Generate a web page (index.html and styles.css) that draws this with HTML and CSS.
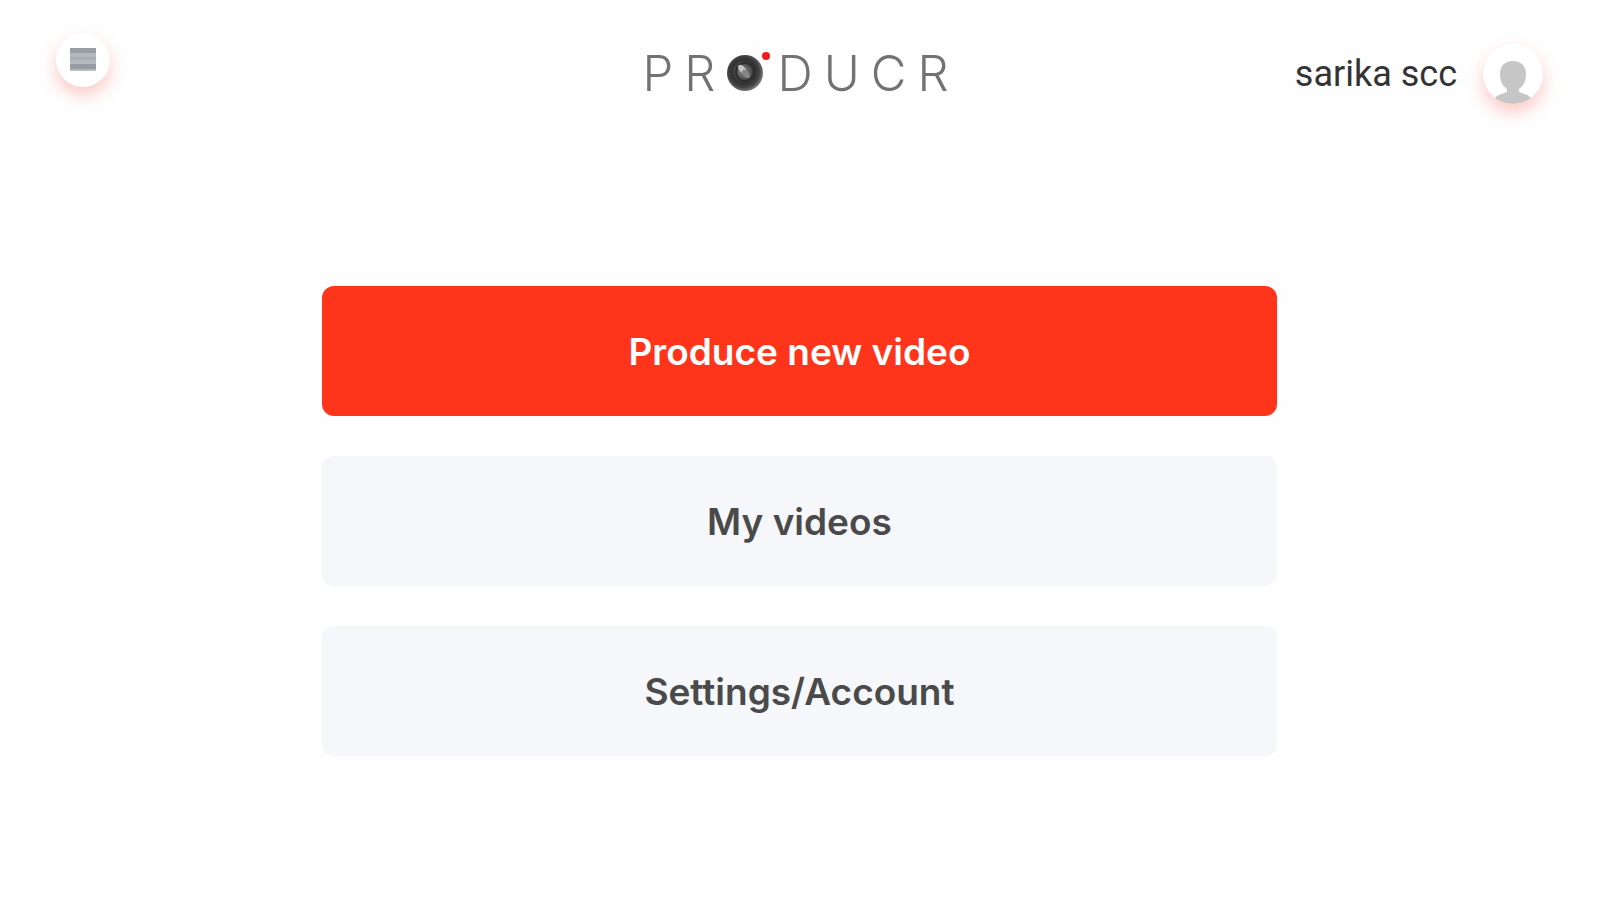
FILE: index.html
```html
<!DOCTYPE html>
<html lang="en">
<head>
    <meta charset="UTF-8">
    <meta name="viewport" content="width=device-width, initial-scale=1.0">
    <title>Producr</title>
    <link rel="stylesheet" href="styles.css">
</head>
<body>

    <header class="header">
        <button class="menu-button" type="button" aria-label="Menu">
            <svg width="28" height="26" viewBox="0 0 28 26">
                <rect x="1" y="1" width="26" height="23" rx="1" fill="#b4b9bf"/>
                <rect x="1" y="1" width="26" height="5" rx="1" fill="#989da4"/>
                <rect x="1" y="10" width="26" height="3" fill="#a9aeb4"/>
                <rect x="1" y="17" width="26" height="5" fill="#969ba2"/>
            </svg>
        </button>

        <a class="logo" href="#" aria-label="Producr">
            <span>P</span>
            <span>R</span>
            <svg class="lens" width="40" height="46" viewBox="0 0 40 46">
                <defs>
                    <radialGradient id="lens" cx="0.46" cy="0.46" r="0.54">
                        <stop offset="0" stop-color="#8a8a8a"/>
                        <stop offset="0.36" stop-color="#555"/>
                        <stop offset="0.6" stop-color="#303030"/>
                        <stop offset="0.82" stop-color="#444"/>
                        <stop offset="1" stop-color="#777"/>
                    </radialGradient>
                </defs>
                <circle cx="19" cy="22" r="18" fill="url(#lens)"/>
                <circle cx="19" cy="21" r="9" fill="none" stroke="#2c2c2c" stroke-width="2"/>
                <ellipse cx="16" cy="18" rx="3" ry="5" fill="#c4c4c4" transform="rotate(-40 16 18)"/>
                <ellipse cx="20" cy="23" rx="3" ry="5" fill="#858585" transform="rotate(-40 20 23)"/>
                <circle cx="40" cy="5" r="4" fill="#ee1c1c"/>
            </svg>
            <span>D</span>
            <span>U</span>
            <span>C</span>
            <span>R</span>
        </a>

        <div class="user">
            <span class="user-name">sarika scc</span>
            <button class="avatar" type="button" aria-label="Profile">
                <svg width="60" height="60" viewBox="0 0 60 60">
                    <path d="M30 17c-8 0-13 5-13 13 0 8 3 12 7 15v3c-5 2-10 3-13 7 5 3 12 5 19 5s14-2 19-5c-3-4-8-5-13-7v-3c4-3 7-7 7-15 0-8-5-13-13-13z" fill="#c6c6c6"/>
                </svg>
            </button>
        </div>
    </header>

    <main class="actions">
        <button class="action primary" type="button">Produce new video</button>
        <button class="action" type="button">My videos</button>
        <button class="action" type="button">Settings/Account</button>
    </main>

</body>
</html>
```

FILE: styles.css
```css
* {
    margin: 0;
    padding: 0;
    box-sizing: border-box;
}

body {
    font-family: 'Inter', sans-serif;
    background-color: #fefefe;
    color: #4a4a4a;
}

button {
    border: none;
    cursor: pointer;
    font-family: inherit;
}

.header {
    display: grid;
    grid-template-columns: 1fr auto 1fr;
    align-items: center;
    min-height: 111px;
    padding: 33px 56px 0;
}

.menu-button,
.avatar {
    display: flex;
    align-items: center;
    justify-content: center;
    background-color: #fff;
    border-radius: 50%;
    box-shadow: 0 8px 16px rgba(244, 67, 54, 0.28);
}

.menu-button {
    width: 54px;
    height: 54px;
    align-self: start;
}

.logo {
    display: flex;
    align-items: center;
    gap: 11px;
    padding: 4px 8px 0 0;
    font-size: 49px;
    font-weight: 300;
    line-height: 60px;
    color: #727272;
    text-decoration: none;
}

.lens {
    overflow: visible;
}

.user {
    display: flex;
    align-items: center;
    justify-content: flex-end;
    gap: 26px;
    padding-top: 4px;
}

.user-name {
    font-family: 'Roboto', sans-serif;
    font-size: 36px;
    color: #333;
}

.avatar {
    width: 60px;
    height: 60px;
    overflow: hidden;
}

.actions {
    display: flex;
    flex-direction: column;
    gap: 40px;
    width: 60%;
    margin: 0 auto;
    padding: 175px 2px 40px;
}

.action {
    min-height: 130px;
    border-radius: 12px;
    background-color: #f5f7fa;
    color: #4a4a4a;
    font-size: 37px;
    font-weight: 600;
}

.primary {
    background-color: #ff351b;
    color: #fff;
}
```
